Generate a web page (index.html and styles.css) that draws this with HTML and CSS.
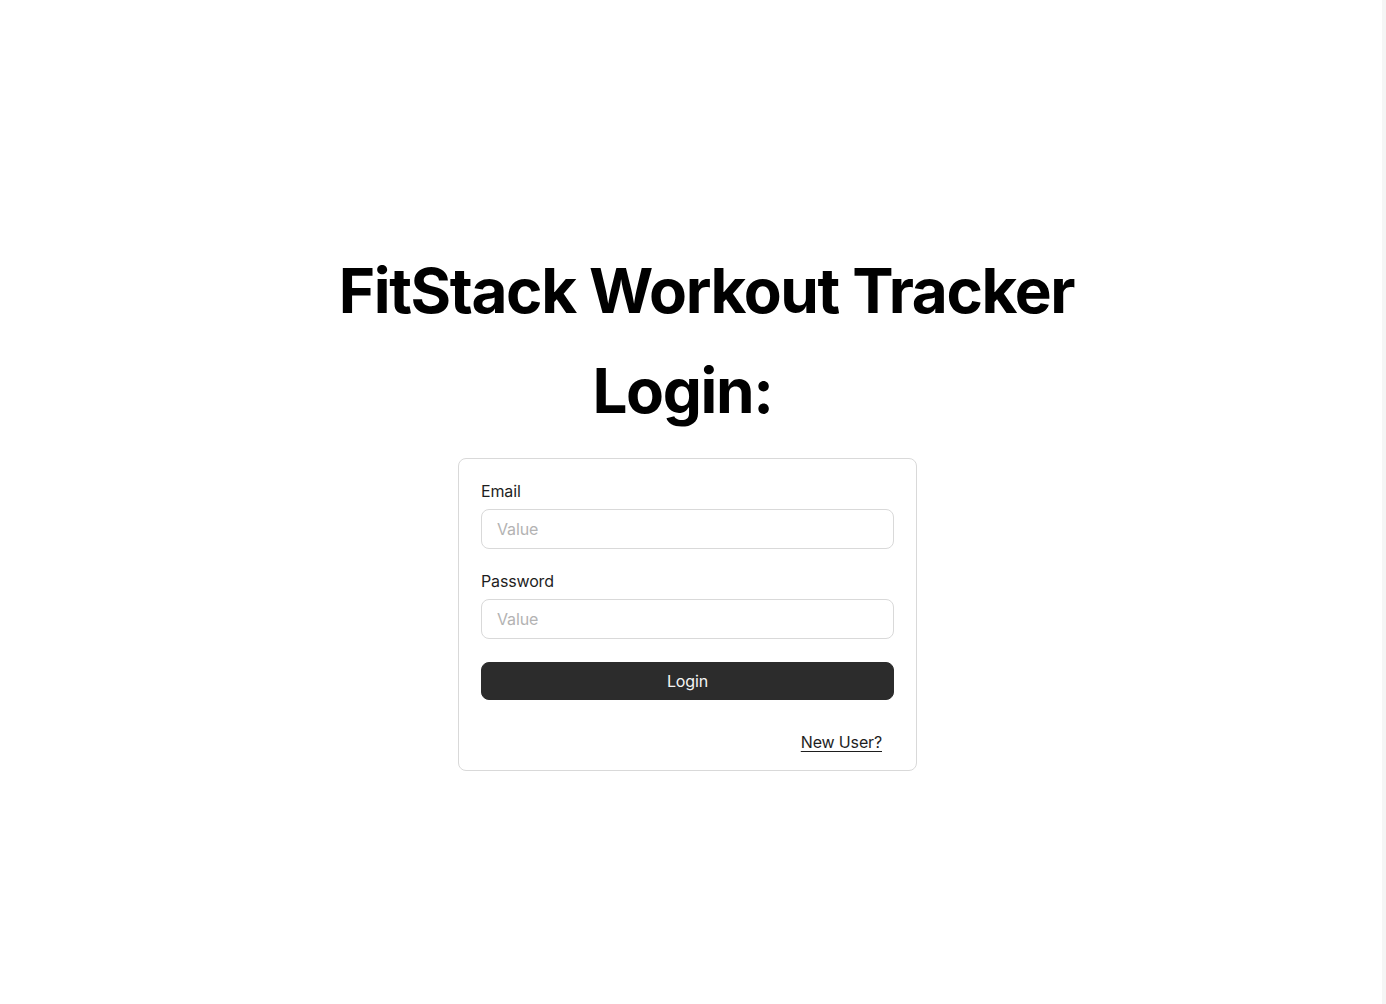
FILE: index.html
```html
<!DOCTYPE html>
<html lang="en">
<head>
<meta charset="utf-8">
<title>FitStack Workout Tracker - Login</title>
<link rel="stylesheet" href="styles.css">
</head>
<body>
<main class="page">
  <h1 class="title">FitStack Workout Tracker</h1>
  <h2 class="subtitle">Login:</h2>
  <form class="card">
    <div class="field">
      <label class="label" for="email">Email</label>
      <input class="input" id="email" type="email" placeholder="Value">
    </div>
    <div class="field">
      <label class="label" for="password">Password</label>
      <input class="input" id="password" type="password" placeholder="Value">
    </div>
    <button class="button" type="button">Login</button>
    <div class="links">
      <a class="link" href="#">New User?</a>
    </div>
  </form>
</main>
</body>
</html>
```
FILE: styles.css
```css
html {
  background: #f5f5f5;
}
body {
  margin: 0 4px 0 0;
  min-height: 1004px;
  background: #ffffff;
  font-family: Inter, "Noto Sans", sans-serif;
  color: #1e1e1e;
}
.page {
  display: flex;
  flex-direction: column;
  align-items: center;
  padding-top: 251px;
}
.title {
  margin: 0 0 0 31px;
  font-size: 62px;
  font-weight: 700;
  line-height: 80px;
  letter-spacing: -0.022em;
  color: #000;
}
.subtitle {
  margin: 20px 17px 0 0;
  font-size: 62px;
  font-weight: 700;
  line-height: 80px;
  letter-spacing: -0.022em;
  color: #000;
}
.card {
  box-sizing: border-box;
  width: 459px;
  margin: 27px 7px 0 0;
  padding: 23px 22px 9px;
  border: 1px solid #d9d9d9;
  border-radius: 8px;
  display: flex;
  flex-direction: column;
  gap: 23px;
  letter-spacing: -0.15px;
}
.field {
  display: flex;
  flex-direction: column;
  gap: 8px;
}
.label {
  font-size: 16px;
  line-height: 19px;
  color: #1e1e1e;
}
.input {
  box-sizing: border-box;
  height: 40px;
  padding: 0 15px;
  border: 1px solid #d9d9d9;
  border-radius: 8px;
  font-family: inherit;
  font-size: 16px;
  letter-spacing: -0.15px;
  color: #1e1e1e;
  background: #fff;
  outline: none;
}
.input::placeholder {
  color: #b3b3b3;
}
.button {
  height: 38px;
  border: 1px solid #2c2c2c;
  border-radius: 8px;
  background: #2c2c2c;
  color: #f5f5f5;
  font-family: inherit;
  font-size: 16px;
  letter-spacing: -0.15px;
  cursor: pointer;
}
.links {
  display: flex;
  justify-content: flex-end;
}
.link {
  padding: 8px 12px;
  font-size: 16px;
  line-height: 22px;
  color: #1e1e1e;
  text-decoration: underline;
  text-underline-offset: 3px;
}
```
